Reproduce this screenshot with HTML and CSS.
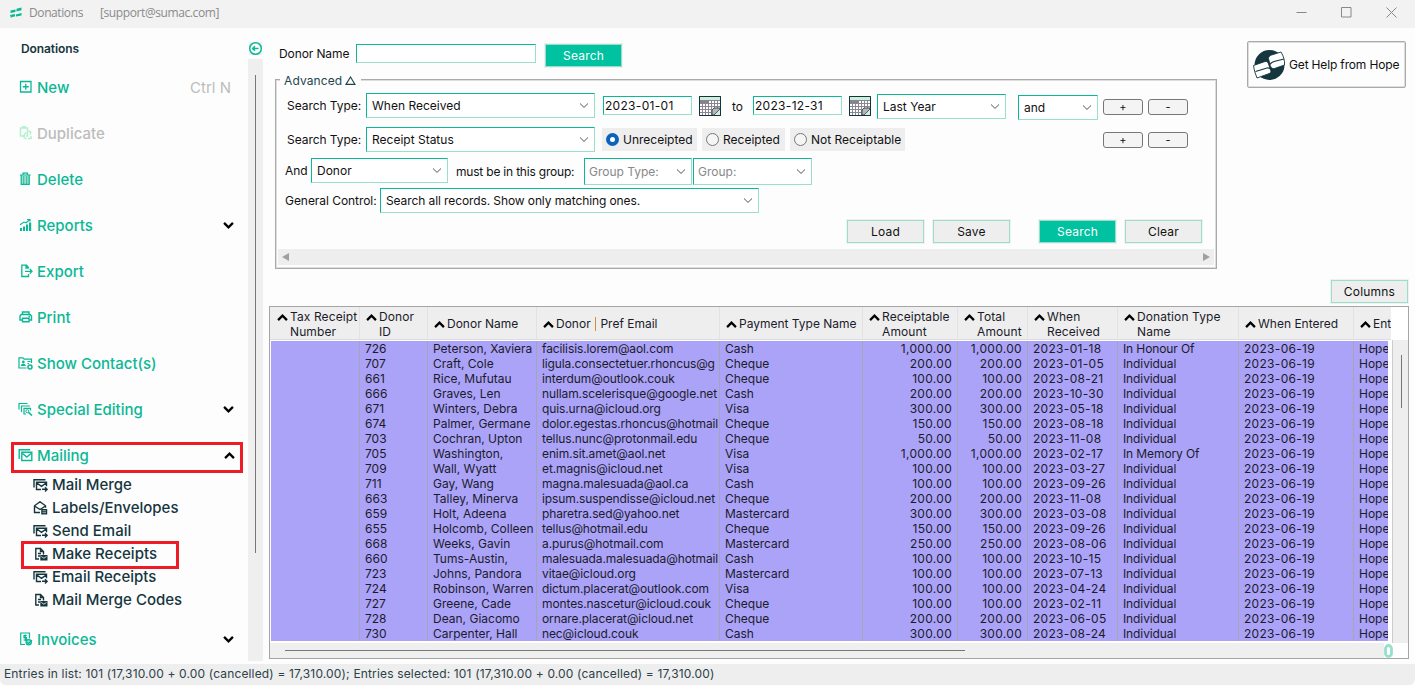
FILE: index.html
```
<!DOCTYPE html>
<html lang="en">
  <head>
    <meta charset="UTF-8" />
    <title>Donations</title>
    <link rel="stylesheet" href="styles.css">
  </head>
  <body>
    <!-- shared icons -->
    <svg class="defs" width="0" height="0">
      <symbol id="down" viewBox="0 0 9 6"><path d="M.7 .8 4.5 4.5 8.3 .8" fill="none" stroke="#000" stroke-width="2"/></symbol>
      <symbol id="up" viewBox="0 0 9 6"><path d="M.7 5.2 4.5 1.5 8.3 5.2" fill="none" stroke="#000" stroke-width="2"/></symbol>
      <symbol id="caret" viewBox="0 0 9 5"><path d="M.5 .5 4.5 4.4 8.5 .5" fill="none" stroke="#555" stroke-width="1"/></symbol>
      <symbol id="calendar" viewBox="0 0 22 20">
        <path d="M.5 .5h21v19H.5z" fill="#fff" stroke="#12343f"/>
        <path d="M1 1h20v3H1z" fill="#cdeed9"/>
        <path d="M1 4h8v4H1z" fill="#858090"/>
        <path d="M1 4.5h20M1 7.5h20M1 10.5h20M1 13.5h20M1 16.500h20M3.500 4v15M6.500 4v15M9.500 4v15M12.500 4v15M15.500 4v15M18.500 4v15" stroke="#8a8792"/>
        <path d="M13 19v-5l2-2h6v1l-6 6z" fill="#b5b5ba" stroke="#444a52"/>
        <path d="M15.500 19l5.500-5.500v5.500z" fill="#d5eedf"/>
        <path d="M.5 .5h21v19H.5z" fill="none" stroke="#12343f"/>
      </symbol>
      <symbol id="mail" viewBox="0 0 15 14">
        <path d="M1.200 11V1.700h11M3.800 4.200h10v8.300h-10zM4.500 5.500l4.300 3.500L13 5.500" fill="none" stroke="currentColor" stroke-width="1.400"/>
      </symbol>
      <symbol id="mail-arrow" viewBox="0 0 15 14">
        <path d="M1 9.500V1.700h11.500M8 11.500H3.500V4.200h10v4M4.200 5.200l4.300 3.200L12.800 5.200M9 11.300h5M12 9.200l2.100 2.100-2.100 2.100" fill="none" stroke="currentColor" stroke-width="1.400"/>
      </symbol>
      <symbol id="open-mail" viewBox="0 0 15 14">
        <path d="M7 11.500H1.500V4.800l5.500-4L12.500 4.800v2M1.500 5l5.500 3.500L12.500 5" fill="none" stroke="currentColor" stroke-width="1.400"/>
        <path d="M8.200 8h6v5.500h-6z" fill="currentColor"/><path d="M9.500 9.800h3.500M9.500 11.700h3.500" stroke="#fdfdfd" stroke-width=".6"/>
      </symbol>
      <symbol id="receipt" viewBox="0 0 15 14">
        <path d="M6 12H2.800V1.500h4.700l3 3v3M7.500 1.500v3h3M5 6.500h3M5 9h2" fill="none" stroke="currentColor" stroke-width="1.400"/>
        <path d="M7.300 8H14.500V13.500H7.300z" fill="currentColor"/><path d="M8.300 9.500l2.600 1.700L13.500 9.500" fill="none" stroke="#fdfdfd" stroke-width=".8"/>
      </symbol>
    </svg>

    <header class="titlebar">
      <svg class="app-icon" width="12" height="12" viewBox="0 0 12 12"><path d="M.5 3.500 5.500 2.500v2.500L.5 6zM6.500 1.800 11.500 .5v2.800L6.500 4.500zM0 8l5-1v2.500l-3 .5-1 1zM6 7.500l5.500-1.500v2.500L6 9.500z" fill="#0bb896"/></svg>
      <span class="app-name">Donations</span>
      <span class="account">[support@sumac.com]</span>
      <div class="window-buttons">
        <svg width="11" height="11" viewBox="0 0 11 11"><path d="M.5 5.500h10" stroke="#888"/></svg>
        <svg width="11" height="11" viewBox="0 0 11 11"><path d="M.5 .5h9.500v9.500H.5z" fill="none" stroke="#888"/></svg>
        <svg width="11" height="11" viewBox="0 0 11 11"><path d="M.5 .5l10 10M10.500 .5l-10 10" stroke="#888"/></svg>
      </div>
    </header>

    <div class="workspace">
      <nav class="sidebar">
        <div class="sidebar-title">Donations</div>
        <div class="item">
          <svg class="icon" viewBox="0 0 14 14"><path d="M1.500 1.500h10.500v10.500H1.500zM3.800 6.750h6M6.750 3.800v6" fill="none" stroke="currentColor" stroke-width="1.300"/></svg>
          <span>New</span><span class="shortcut">Ctrl N</span>
        </div>
        <div class="item disabled">
          <svg class="icon" viewBox="0 0 14 14"><path d="M5.500 10H1.500V2H8.500v8H7M4 2V.8h2V2M5.200 12.500v-4l2-2M9.500 5.500h2v3M12 10v2.500H9M6 12.500h1.500" fill="none" stroke="currentColor" stroke-width="1.400"/></svg>
          <span>Duplicate</span>
        </div>
        <div class="item">
          <svg class="icon" viewBox="0 0 14 14"><path d="M2 3.500h8.500v8.500H2z" fill="#9adfcf"/><path d="M.8 3h10.900M4 2.700V1.200h4.500v1.500M2.200 3v9.300h8V3" fill="none" stroke="currentColor" stroke-width="1.200"/><path d="M4.700 4v8M7.700 4v8" stroke="currentColor" stroke-width=".8"/></svg>
          <span>Delete</span>
        </div>
        <div class="item">
          <svg class="icon" viewBox="0 0 14 14"><path d="M1 10h2v3H1zM4 8.500h2V13H4zM7 6.500h2V13H7zM10 4.500h2.200V13H10z" fill="currentColor"/><path d="M1 6.800 5 4l2 .8L10.500 2M8 1.500h3v2" fill="none" stroke="currentColor" stroke-width="1.100"/></svg>
          <span>Reports</span><svg class="arrow"><use href="#down"/></svg>
        </div>
        <div class="item">
          <svg class="icon" viewBox="0 0 14 14"><path d="M9.500 4.500V3.500L7.500 1.200H2.800v11.300h6.700V10M6 7.300h7M10.800 5l2.200 2.300-2.200 2.300M7 1.500v2.500h2.500" fill="none" stroke="currentColor" stroke-width="1.300"/></svg>
          <span>Export</span>
        </div>
        <div class="item">
          <svg class="icon" viewBox="0 0 14 14"><path d="M3.500 4.500V2h6.500v2.500M3 10H1V6l1.200-1.500h9L12.500 6v4h-2M3.500 8.300h6.500v3.500H3.500zM9.500 6.500h1.500" fill="none" stroke="currentColor" stroke-width="1.400"/></svg>
          <span>Print</span>
        </div>
        <div class="item">
          <svg class="icon wide" viewBox="0 0 15 14"><path d="M8.500 12H1V1.800h4l1.200 1.300H13.500V7M9.500 5.500h3M9.500 7.500h1.500" fill="none" stroke="currentColor" stroke-width="1.200"/><circle cx="5.300" cy="6" r="1.400" fill="currentColor"/><path d="M2.800 10c0-3 5-3 5 0z" fill="currentColor"/><circle cx="12" cy="11" r="2" fill="none" stroke="currentColor" stroke-width="1.500"/></svg>
          <span>Show Contact(s)</span>
        </div>
        <div class="item">
          <svg class="icon wide" viewBox="0 0 15 14"><path d="M1 7.500V1.500h8.500M3.500 10V4h8.500M8 12H6V6.300h6.500V8.500" fill="none" stroke="currentColor" stroke-width="1.200"/><circle cx="9.300" cy="9.200" r="1.500" fill="none" stroke="currentColor"/><path d="M10.500 10.300l3.500 3.200" stroke="currentColor" stroke-width="1.600"/></svg>
          <span>Special Editing</span><svg class="arrow"><use href="#down"/></svg>
        </div>
        <div class="item mailing">
          <svg class="icon wide"><use href="#mail"/></svg>
          <span>Mailing</span><svg class="arrow"><use href="#up"/></svg>
        </div>
        <div class="submenu">
          <div class="subitem"><svg class="icon wide"><use href="#mail-arrow"/></svg>Mail Merge</div>
          <div class="subitem"><svg class="icon wide"><use href="#open-mail"/></svg>Labels/Envelopes</div>
          <div class="subitem"><svg class="icon wide"><use href="#mail-arrow"/></svg>Send Email</div>
          <div class="subitem marked"><svg class="icon wide"><use href="#receipt"/></svg>Make Receipts</div>
          <div class="subitem"><svg class="icon wide"><use href="#mail-arrow"/></svg>Email Receipts</div>
          <div class="subitem"><svg class="icon wide"><use href="#receipt"/></svg>Mail Merge Codes</div>
        </div>
        <div class="item">
          <svg class="icon" viewBox="0 0 14 14"><path d="M6 12.500H1.700V1H10.500v5.500M7.800 3.500H5v2.200h2.500V8H4.500M6.300 2.500v6.500" fill="none" stroke="currentColor" stroke-width="1.200"/><circle cx="9.700" cy="10.300" r="2.600" fill="#9adfcf" stroke="currentColor" stroke-width="1.300"/><path d="M8 10.300l1.500 1.200L13 8.300" fill="none" stroke="currentColor" stroke-width="1.300"/></svg>
          <span>Invoices</span><svg class="arrow"><use href="#down"/></svg>
        </div>
      </nav>

      <div class="splitter">
        <svg width="15" height="15" viewBox="0 0 15 15"><path d="M1 1h13v13H1z" fill="#eee"/><circle cx="7.500" cy="7.500" r="5.800" fill="#fff" stroke="#0bb896" stroke-width="1.500"/><path d="M4.500 7.500h6M7 5.200 4.700 7.500 7 9.800" fill="none" stroke="#0bb896" stroke-width="1.600"/></svg>
        <div class="splitter-track"><div class="splitter-thumb"></div></div>
      </div>

      <main class="main">
        <div class="top">
          <div class="search-area">
            <div class="donor-search">
              <label>Donor Name</label>
              <div class="field donor-field"></div>
              <div class="button primary">Search</div>
            </div>

            <section class="advanced">
              <div class="legend">Advanced <svg width="11" height="9" viewBox="0 0 11 9"><path d="M1 8.400 5.500 1l4.500 7.400z" fill="none" stroke="#1f4650" stroke-width="1.100"/></svg></div>
              <div class="line line-1">
                <label class="search-type">Search Type:</label>
                <div class="select w-type">When Received<svg><use href="#caret"/></svg></div>
                <div class="field date">2023-01-01</div>
                <svg class="calendar"><use href="#calendar"/></svg>
                <span class="to">to</span>
                <div class="field date">2023-12-31</div>
                <svg class="calendar"><use href="#calendar"/></svg>
                <div class="select w-range">Last Year<svg><use href="#caret"/></svg></div>
                <div class="select w-op">and<svg><use href="#caret"/></svg></div>
                <div class="mini first">+</div>
                <div class="mini">-</div>
              </div>
              <div class="line line-2">
                <label class="search-type">Search Type:</label>
                <div class="select w-type">Receipt Status<svg><use href="#caret"/></svg></div>
                <div class="radios">
                  <div class="radio r1"><i class="on"></i>Unreceipted</div>
                  <div class="radio r2"><i></i>Receipted</div>
                  <div class="radio r3"><i></i>Not Receiptable</div>
                </div>
                <div class="mini last">+</div>
                <div class="mini">-</div>
              </div>
              <div class="line line-3">
                <label class="and">And</label>
                <div class="select w-donor">Donor<svg><use href="#caret"/></svg></div>
                <span class="must">must be in this group:</span>
                <div class="select muted w-gtype">Group Type:<svg><use href="#caret"/></svg></div>
                <div class="select muted w-group">Group:<svg><use href="#caret"/></svg></div>
              </div>
              <div class="line line-4">
                <label class="general">General Control:</label>
                <div class="select w-general">Search all records. Show only matching ones.<svg><use href="#caret"/></svg></div>
              </div>
              <div class="actions">
                <div class="button">Load</div>
                <div class="button">Save</div>
                <div class="button primary">Search</div>
                <div class="button">Clear</div>
              </div>
              <div class="hscroll">
                <svg width="7" height="8"><path d="M7 0v8L0 4z" fill="#a0a0a0"/></svg>
                <svg width="7" height="8"><path d="M0 0v8l7-4z" fill="#a0a0a0"/></svg>
              </div>
            </section>
          </div>

          <div class="help">
            <svg width="32" height="32" viewBox="0 0 32 32">
              <circle cx="16.500" cy="16" r="15" fill="#16363f"/>
              <path d="M.5 16.500 12 12.500c2.500-.5 3 1 3.500 2.500l2.500 7c0 2-1.500 2.500-3 3L4 29c-1.500-4-3-8-3.500-12.500z" fill="#fff" stroke="#16363f" stroke-width=".9"/>
              <path d="M2.500 22.500 14 19c2.500-.5 3.500.5 4 2" fill="none" stroke="#16363f" stroke-width="1.100"/>
              <path d="M15.500 9.500c0-2 1.500-2.800 3-3.500L28 3c2.500 4 4 9 3.500 13l-10 3.500c-2 .5-3.500-.5-4.300-3z" fill="#fff" stroke="#16363f" stroke-width=".9"/>
              <path d="M17 15.500c1-2 2.500-2.500 4-3l10-2.500" fill="none" stroke="#16363f" stroke-width="1.100"/>
            </svg>
            Get Help from Hope
          </div>
        </div>

        <div class="columns-bar"><div class="button">Columns</div></div>

        <div class="grid">
          <div class="grid-head">
            <div class="th c-tax two"><svg><use href="#up"/></svg><span>Tax Receipt<br>Number</span></div>
            <div class="th c-id two"><svg><use href="#up"/></svg><span>Donor<br>ID</span></div>
            <div class="th c-name"><svg><use href="#up"/></svg><span>Donor Name</span></div>
            <div class="th c-email"><svg><use href="#up"/></svg><span>Donor <b class="bar"></b> Pref Email</span></div>
            <div class="th c-pay"><svg><use href="#up"/></svg><span>Payment Type Name</span></div>
            <div class="th c-ramt two"><svg><use href="#up"/></svg><span>Receiptable<br>Amount</span></div>
            <div class="th c-tamt two"><svg><use href="#up"/></svg><span>Total<br>Amount</span></div>
            <div class="th c-recv two"><svg><use href="#up"/></svg><span>When<br>Received</span></div>
            <div class="th c-type two"><svg><use href="#up"/></svg><span>Donation Type<br>Name</span></div>
            <div class="th c-ent"><svg><use href="#up"/></svg><span>When Entered</span></div>
            <div class="th c-by"><svg><use href="#up"/></svg><span>Ent</span></div>
          </div>
          <div class="grid-body">
            <div class="rows" id="rows"></div>
            <div class="vscroll"><div class="vthumb"></div></div>
          </div>
          <div class="grid-foot"><div class="foot-track"><div class="hthumb"></div></div><svg class="zero" width="9" height="14" viewBox="0 0 9 14"><rect x="1.500" y="1.500" width="6" height="11" rx="3" fill="none" stroke="#98dfcc" stroke-width="2.800"/></svg></div>
        </div>
      </main>
    </div>

    <footer class="status">Entries in list: 101 (17,310.00 + 0.00 (cancelled) = 17,310.00); Entries selected: 101 (17,310.00 + 0.00 (cancelled) = 17,310.00)</footer>

    <script>
      // id, name, email, payment, amount, received, type
      const donations = [
        ["726", "Peterson, Xaviera", "facilisis.lorem@aol.com", "Cash", "1,000.00", "2023-01-18", "In Honour Of"],
        ["707", "Craft, Cole", "ligula.consectetuer.rhoncus@g", "Cheque", "200.00", "2023-01-05", "Individual"],
        ["661", "Rice, Mufutau", "interdum@outlook.couk", "Cheque", "100.00", "2023-08-21", "Individual"],
        ["666", "Graves, Len", "nullam.scelerisque@google.net", "Cash", "200.00", "2023-10-30", "Individual"],
        ["671", "Winters, Debra", "quis.urna@icloud.org", "Visa", "300.00", "2023-05-18", "Individual"],
        ["674", "Palmer, Germane", "dolor.egestas.rhoncus@hotmail", "Cheque", "150.00", "2023-08-18", "Individual"],
        ["703", "Cochran, Upton", "tellus.nunc@protonmail.edu", "Cheque", "50.00", "2023-11-08", "Individual"],
        ["705", "Washington,", "enim.sit.amet@aol.net", "Visa", "1,000.00", "2023-02-17", "In Memory Of"],
        ["709", "Wall, Wyatt", "et.magnis@icloud.net", "Visa", "100.00", "2023-03-27", "Individual"],
        ["711", "Gay, Wang", "magna.malesuada@aol.ca", "Cash", "100.00", "2023-09-26", "Individual"],
        ["663", "Talley, Minerva", "ipsum.suspendisse@icloud.net", "Cheque", "200.00", "2023-11-08", "Individual"],
        ["659", "Holt, Adeena", "pharetra.sed@yahoo.net", "Mastercard", "300.00", "2023-03-08", "Individual"],
        ["655", "Holcomb, Colleen", "tellus@hotmail.edu", "Cheque", "150.00", "2023-09-26", "Individual"],
        ["668", "Weeks, Gavin", "a.purus@hotmail.com", "Mastercard", "250.00", "2023-08-06", "Individual"],
        ["660", "Tums-Austin,", "malesuada.malesuada@hotmail", "Cash", "100.00", "2023-10-15", "Individual"],
        ["723", "Johns, Pandora", "vitae@icloud.org", "Mastercard", "100.00", "2023-07-13", "Individual"],
        ["724", "Robinson, Warren", "dictum.placerat@outlook.com", "Visa", "100.00", "2023-04-24", "Individual"],
        ["727", "Greene, Cade", "montes.nascetur@icloud.couk", "Cheque", "100.00", "2023-02-11", "Individual"],
        ["728", "Dean, Giacomo", "ornare.placerat@icloud.net", "Cheque", "200.00", "2023-06-05", "Individual"],
        ["730", "Carpenter, Hall", "nec@icloud.couk", "Cash", "300.00", "2023-08-24", "Individual"],
      ];

      const columns = ["tax", "id", "name", "email", "pay", "ramt", "tamt", "recv", "type", "ent", "by"];

      document.getElementById("rows").innerHTML = donations
        .map(([id, name, email, pay, amount, received, type]) => {
          const values = ["", id, name, email, pay, amount, amount, received, type, "2023-06-19", "Hope"];
          return `<div class="row">${values.map((v, i) => `<div class="td c-${columns[i]}">${v}</div>`).join("")}</div>`;
        })
        .join("");
    </script>
  </body>
</html>
```
FILE: styles.css
```
*,
*::after {
  box-sizing: border-box;
}

body {
  margin: 0;
  width: 1415px;
  height: 686px;
  overflow: hidden;
  display: flex;
  flex-direction: column;
  background: #fdfdfd;
  font-family: Inter, "Liberation Sans", sans-serif;
  font-size: 12px;
  line-height: 15px;
  color: #111;
  white-space: nowrap;
}

svg {
  flex: none;
  display: block;
}

.defs {
  position: absolute;
}

/* title bar */
.titlebar {
  display: flex;
  align-items: center;
  flex: none;
  height: 28px;
  padding: 0 18px 3px 10px;
  background: #f2f2f2;
  color: #8a8a8a;
  font-family: "Open Sans", "Noto Sans", sans-serif;
  letter-spacing: -.4px;
}

.app-name {
  margin-left: 7px;
  width: 71px;
}

.window-buttons {
  display: flex;
  gap: 34px;
  margin-left: auto;
}

.workspace {
  display: flex;
  height: 636px;
  flex: none;
}

/* sidebar */
.sidebar {
  width: 248px;
  flex: none;
  color: #0bb896;
  font-size: 15px;
  font-weight: 500;
}

.sidebar-title {
  height: 36px;
  padding: 13px 0 0 21px;
  font-size: 12px;
  font-weight: 600;
  letter-spacing: -.1px;
  color: #16363f;
}

.item {
  position: relative;
  display: flex;
  align-items: center;
  height: 46px;
  padding: 0 14px 0 19px;
}

.icon {
  width: 14px;
  height: 14px;
  margin-right: 4px;
}

.icon.wide {
  width: 15px;
  margin-left: -1px;
}

.shortcut {
  margin-left: auto;
  margin-right: 3px;
  color: #bcbcbc;
  font-weight: 400;
}

.disabled {
  color: #b0f0cc;
}

.disabled span {
  color: #bcbcbc;
}

.arrow {
  width: 11px;
  height: 7px;
  margin-left: auto;
}

.mailing .arrow {
  margin-right: -1px;
}

/* red highlight frames */
.mailing::after,
.marked::after {
  content: "";
  position: absolute;
  border: 3px solid #ee1c25;
}

.mailing::after {
  left: 11px;
  top: 10px;
  width: 232px;
  height: 31px;
}

.submenu {
  margin: -5px 0 5px;
  color: #16363f;
}

.subitem {
  position: relative;
  display: flex;
  align-items: center;
  height: 23px;
  padding-left: 34px;
}

.marked::after {
  left: 21px;
  top: -1px;
  width: 158px;
  height: 28px;
}

/* splitter between menu and content */
.splitter {
  width: 15px;
  flex: none;
  padding-top: 13px;
}

.splitter-track {
  height: 602px;
  margin-top: 3px;
  padding: 16px 0 0 7px;
  background: #efefef;
}

.splitter-thumb {
  width: 1px;
  height: 478px;
  background: #777;
}

.main {
  flex: 1;
  padding: 13px 6px 0 6px;
}

.top {
  display: flex;
  height: 228px;
}

.search-area {
  width: 948px;
  padding: 3px 0 0 6px;
  margin-right: 30px;
}

.donor-search {
  display: flex;
  padding-left: 4px;
}

.donor-search label {
  width: 77px;
  padding-top: 2px;
  letter-spacing: -.1px;
}

.field {
  border: 1px solid;
  border-color: #0bb896 #98dfcc #98dfcc #0bb896;
  background: #fff;
}

.donor-field {
  width: 180px;
  height: 19px;
  margin-right: 9px;
}

.button {
  width: 77px;
  height: 23px;
  padding-top: 3px;
  text-align: center;
  letter-spacing: .2px;
  background: #eee;
  border: 1px solid #98dfcc;
  outline: 1px solid #f0f0f0;
}

.button.primary {
  background: #00c2a0;
  color: #fff;
}

/* advanced search box */
.advanced {
  position: relative;
  width: 942px;
  height: 190px;
  margin-top: 12px;
  padding-top: 13px;
  border: 1px solid #aaa;
  box-shadow: inset 1px 1px #ddd, inset -1px -1px #ddd;
}

.legend {
  position: absolute;
  left: 4px;
  top: -7px;
  display: flex;
  align-items: center;
  gap: 3px;
  padding: 0 5px 0 4px;
  background: #fdfdfd;
  color: #1f4650;
  letter-spacing: .1px;
}

.line {
  display: flex;
  align-items: flex-start;
}

.line-1 {
  height: 34px;
}

.line-2 {
  height: 31px;
}

.line-3 {
  height: 30px;
}

.line-4 {
  height: 32px;
}

.line label {
  padding-top: 5px;
  letter-spacing: -.05px;
}

.search-type {
  width: 90px;
  padding-left: 11px;
}

.and {
  width: 35px;
  padding-left: 9px;
}

.general {
  width: 104px;
  padding-left: 9px;
}

.select {
  display: flex;
  align-items: center;
  justify-content: space-between;
  height: 25px;
  padding: 0 5px 0 5px;
  border: 1px solid;
  border-color: #0bb896 #98dfcc #98dfcc #0bb896;
  background: #fff;
}

.select svg {
  width: 10px;
  height: 5px;
}

.muted {
  height: 27px;
  padding-left: 4px;
  color: #888;
}

.w-type {
  width: 229px;
}

.w-range {
  width: 129px;
  margin: 1px 12px 0 6px;
}

.w-op {
  width: 80px;
  margin-top: 2px;
}

.w-donor {
  width: 137px;
}

.w-gtype {
  width: 108px;
}

.w-group {
  width: 119px;
  margin-left: 1px;
}

.w-general {
  width: 379px;
  letter-spacing: -.1px;
}

.date {
  width: 89px;
  height: 19px;
  margin: 3px 0 0;
  padding: 1px 0 0 1px;
  letter-spacing: .3px;
}

.w-type + .date {
  margin-left: 8px;
}

.calendar {
  width: 22px;
  height: 20px;
  margin: 3px 0 0 7px;
}

.to {
  width: 32px;
  padding: 6px 0 0 11px;
}

.mini {
  width: 40px;
  height: 16px;
  margin: 6px 0 0 5px;
  border: 1px solid #777;
  border-radius: 3px;
  background: #f4f4f4;
  font-size: 11px;
  line-height: 14px;
  text-align: center;
}

.line-2 .mini {
  margin-top: 5px;
}

.radios {
  display: flex;
  gap: 5px;
  width: 501px;
  padding: 1px 0 0 7px;
}

.radio {
  display: flex;
  align-items: center;
  height: 23px;
  padding-left: 4px;
  background: #eee;
}

.r1 {
  width: 95px;
}

.r2 {
  width: 83px;
}

.r3 {
  width: 115px;
}

.radio i {
  width: 13px;
  height: 13px;
  margin-right: 4px;
  border: 1px solid #777;
  border-radius: 50%;
  background: #f5f5f5;
}

.radio .on {
  border: 4px solid #0a62bb;
  background: #fff;
}

.last {
  margin-left: 7px;
}

.must {
  width: 136px;
  padding: 6px 0 0 8px;
  letter-spacing: -.2px;
}

.actions {
  display: flex;
  gap: 9px;
  padding-left: 571px;
  height: 29px;
}

.actions .primary {
  margin-left: 20px;
}

.hscroll {
  display: flex;
  justify-content: space-between;
  align-items: center;
  height: 16px;
  margin: 0 2px;
  padding: 0 4px 0 4px;
  background: #eee;
}

.help {
  display: flex;
  align-items: center;
  gap: 4px;
  width: 159px;
  height: 47px;
  padding-left: 5px;
  letter-spacing: -.16px;
  border: 1px solid #aaa;
  border-radius: 2px;
  box-shadow: inset 0 0 0 1px #ddd;
}

.columns-bar {
  display: flex;
  justify-content: flex-end;
  height: 37px;
  padding: 11px 1px 0 0;
}

/* donations grid */
.grid {
  width: 1140px;
  height: 353px;
  border: 1px solid #a5a5a5;
  background: #fff;
  color: #1b1b2b;
}

.grid-head {
  display: flex;
  width: 1121px;
  height: 33px;
  padding-left: 1px;
  overflow: hidden;
  background: #eee;
  border-bottom: 1px solid #ddd;
}

.th {
  display: flex;
  flex: none;
  align-items: center;
  padding-left: 6px;
  border-right: 1px solid #e2e2e6;
}

.th svg {
  width: 11px;
  height: 7px;
  margin: 2px 2px 0 0;
}

.two svg {
  margin-top: -12px;
}

.two span {
  margin-top: 2px;
  letter-spacing: .1px;
}

.bar {
  display: inline-block;
  width: 1px;
  height: 14px;
  margin: 0 1px;
  vertical-align: -3px;
  background: #d98c3a;
}

.grid-body {
  display: flex;
  height: 303px;
}

.rows {
  width: 1123px;
  padding: 1px 0 1px 1px;
  border-right: 1px solid #ccc;
}

.row {
  display: flex;
  width: 1117px;
  height: 15px;
  overflow: hidden;
  background: #aba3f8;
}

.td {
  flex: none;
  padding-left: 5px;
  overflow: hidden;
  border-right: 1px solid #a5a5b5;
}

.c-tax { width: 89px; }
.c-id { width: 68px; }
.c-name { width: 109px; }
.c-email { width: 183px; }
.c-pay { width: 143px; }
.c-ramt { width: 95px; }
.c-tamt { width: 70px; }
.c-recv { width: 90px; }
.c-type { width: 121px; }
.c-ent { width: 115px; }
.c-by { width: 40px; }

.td.c-email,
.td.c-type {
  letter-spacing: -.11px;
}

.td.c-ramt,
.td.c-tamt {
  padding: 0 5px 0 0;
  text-align: right;
}

.td.c-ramt,
.td.c-tamt,
.td.c-recv,
.td.c-ent {
  letter-spacing: .3px;
}

.vscroll {
  width: 15px;
  padding: 15px 0 0 8px;
  background: #eee;
}

.vthumb {
  width: 1px;
  height: 53px;
  background: #777;
}

.grid-foot {
  display: flex;
  height: 15px;
}

.foot-track {
  width: 1114px;
  padding: 7px 0 0 15px;
  background: #efefef;
}

.hthumb {
  width: 680px;
  height: 1px;
  background: #777;
}

.zero {
  margin-top: 1px;
}

.status {
  height: 21px;
  padding: 2px 0 0 4px;
  background: #eee;
  color: #2c4149;
  border-radius: 0 0 6px 6px;
  letter-spacing: .155px;
}
```
